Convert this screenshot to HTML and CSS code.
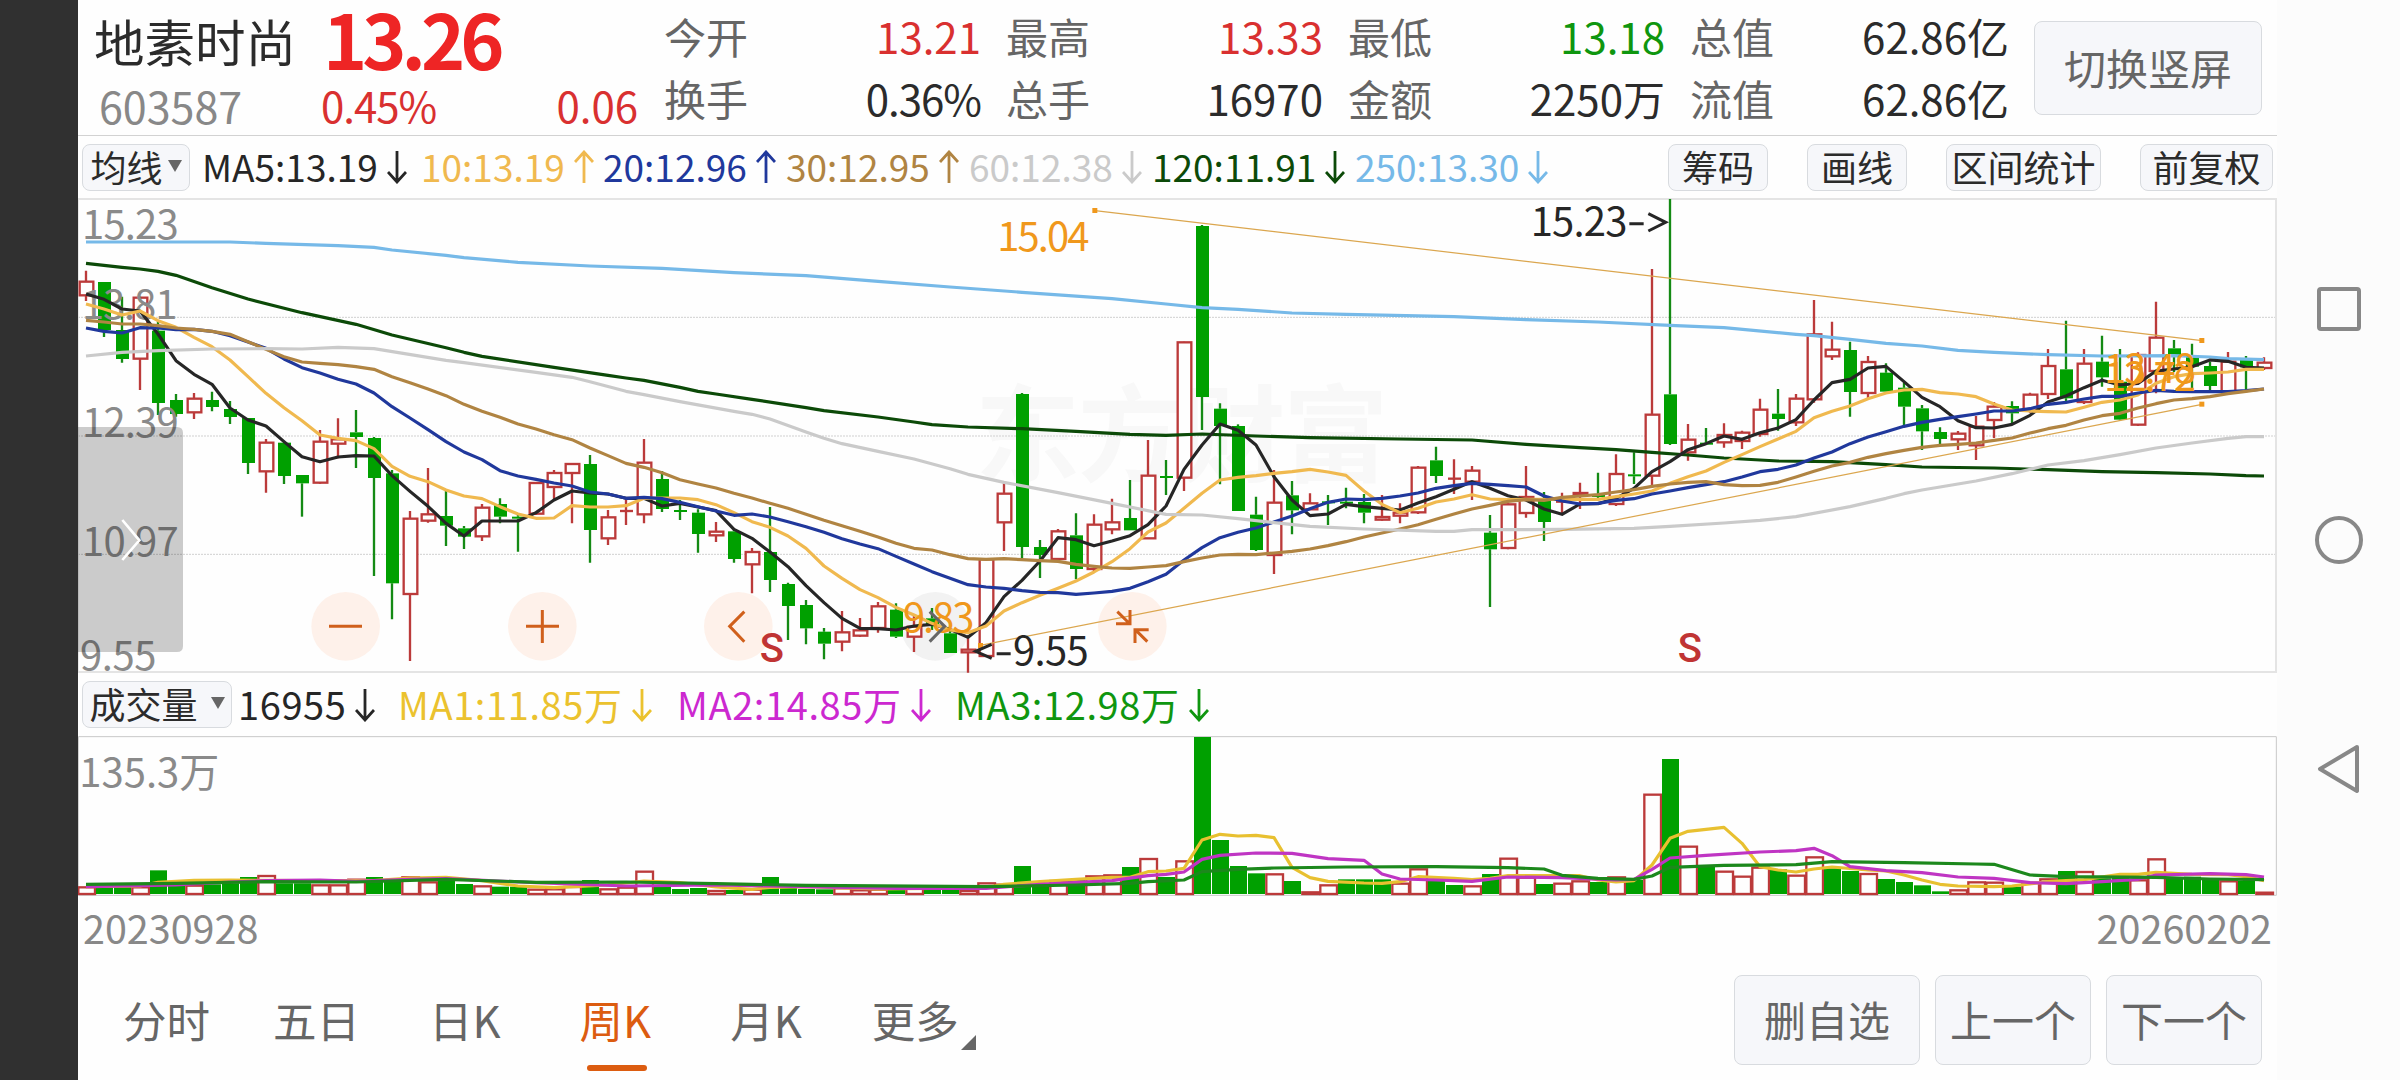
FILE: index.html
```html
<!DOCTYPE html>
<html lang="zh-CN">
<head>
    <meta charset="utf-8">
    <title>地素时尚 603587</title>
    <link rel="stylesheet" href="styles.css">
</head>
<body>
    <div class="cutout"></div>
    <main class="app">
        <header class="quote">
            <div class="stock">
                <div class="name">地素时尚</div>
                <div class="price">13.26</div>
                <div class="code">603587</div>
                <div class="change"><span>0.45%</span><span>0.06</span></div>
            </div>
            <div class="stats">
                <div class="stat"><label>今开</label><span class="up">13.21</span></div>
                <div class="stat"><label>最高</label><span class="up">13.33</span></div>
                <div class="stat"><label>最低</label><span class="down">13.18</span></div>
                <div class="stat"><label>总值</label><span>62.86亿</span></div>
                <div class="stat"><label>换手</label><span class="percent">0.36%</span></div>
                <div class="stat"><label>总手</label><span>16970</span></div>
                <div class="stat"><label>金额</label><span>2250万</span></div>
                <div class="stat"><label>流值</label><span>62.86亿</span></div>
            </div>
            <button class="btn rotate">切换竖屏</button>
        </header>

        <div class="toolbar">
            <button class="btn select">均线<i class="caret"></i></button>
            <div class="ma-list">
                <span class="ma5">MA5:13.19<svg class="arrow"><use href="#down"/></svg></span>
                <span class="ma10">10:13.19<svg class="arrow"><use href="#up"/></svg></span>
                <span class="ma20">20:12.96<svg class="arrow"><use href="#up"/></svg></span>
                <span class="ma30">30:12.95<svg class="arrow"><use href="#up"/></svg></span>
                <span class="ma60">60:12.38<svg class="arrow"><use href="#down"/></svg></span>
                <span class="ma120">120:11.91<svg class="arrow"><use href="#down"/></svg></span>
                <span class="ma250">250:13.30<svg class="arrow"><use href="#down"/></svg></span>
            </div>
            <div class="tools">
                <button class="btn">筹码</button>
                <button class="btn">画线</button>
                <button class="btn wide">区间统计</button>
                <button class="btn mid">前复权</button>
            </div>
        </div>

        <!-- 3 chart units = 1px, one candle every 54 units -->
        <svg class="chart" viewBox="24 24 6597 1425">
            <text class="watermark" x="2715" y="848" textLength="1240">东方财富</text>
            <path class="grid" d="M24 382H6618M24 738H6618M24 1093H6618"/>
            <path class="frame" d="M24 27H6618V1446H24"/>
            <path class="frame thin" d="M25 27V1446"/>
            <g class="controls">
                <circle cx="827" cy="1309" r="103"/>
                <circle cx="1417" cy="1309" r="103"/>
                <circle cx="2005" cy="1309" r="103"/>
                <circle class="off" cx="2596" cy="1309" r="103"/>
                <circle cx="3187" cy="1309" r="103"/>
            </g>
            <g id="candles"></g>
            <g class="axis">
                <text x="36" y="147" textLength="290">15.23</text>
                <text x="36" y="387" textLength="286">13.81</text>
                <text x="36" y="742" textLength="290">12.39</text>
                <text x="36" y="1099" textLength="290">10.97</text>
                <text x="30" y="1440" textLength="229">9.55</text>
            </g>
            <g id="lines"></g>
            <g class="trend">
                <path d="M3075 62L6396 452M2731 1366L6396 643"/>
                <rect x="3067" y="54" width="15" height="15"/>
                <rect x="6388" y="444" width="15" height="15"/>
                <rect x="2724" y="1359" width="15" height="15"/>
                <rect x="6388" y="635" width="15" height="15"/>
                <text x="2782" y="184" textLength="276">15.04</text>
                <text x="2499" y="1325" textLength="214">9.83</text>
                <text x="6102" y="578" textLength="276">13.48</text>
                <text x="6102" y="603" textLength="276">12.72</text>
            </g>
            <g class="peak">
                <text x="4382" y="138" textLength="290">15.23</text>
                <path d="M4678 101H4721M4735 71L4787 97L4735 123"/>
                <text x="2829" y="1425" textLength="227">9.55</text>
                <path d="M2780 1391H2822M2765 1363L2717 1384L2765 1405"/>
            </g>
            <g class="signal">
                <text x="2069" y="1416">S</text>
                <text x="4823" y="1416">S</text>
            </g>
            <g class="icons">
                <path d="M777 1309H876M1368 1309H1467M1417 1260V1359M2023 1265L1979 1309L2023 1355"/>
                <path class="off" d="M2579 1265L2624 1309L2579 1355"/>
                <path d="M3142 1265L3180 1302M3138 1301H3180V1260M3232 1355L3195 1318M3236 1319H3195V1359"/>
            </g>
            <path class="drawer" d="M24 711H321Q339 711 339 729V1368Q339 1386 321 1386H24Z"/>
            <path class="drawer-arrow" d="M157 990L208 1051L157 1110"/>
        </svg>

        <div class="toolbar vol-bar">
            <button class="btn select">成交量<i class="caret"></i></button>
            <div class="vol-list">
                <span class="ma5">16955<svg class="arrow"><use href="#down"/></svg></span>
                <span class="v1">MA1:11.85万<svg class="arrow"><use href="#down"/></svg></span>
                <span class="v2">MA2:14.85万<svg class="arrow"><use href="#down"/></svg></span>
                <span class="v3">MA3:12.98万<svg class="arrow"><use href="#down"/></svg></span>
            </div>
        </div>

        <svg class="volume" viewBox="24 198 6597 483">
            <path class="vol-frame" d="M25 200H6619V676H25Z"/>
            <g class="axis"><text x="28" y="352" textLength="420">135.3万</text></g>
            <g id="bars"></g>
            <g id="vol-lines"></g>
        </svg>

        <div class="dates"><span>20230928</span><span>20260202</span></div>

        <footer class="bottom">
            <div class="tabs">
                <a>分时</a>
                <a class="days">五日</a>
                <a class="k">日K</a>
                <a class="k active">周K</a>
                <a class="month">月K</a>
                <a class="more">更多</a>
            </div>
            <div class="actions">
                <button class="btn big">删自选</button>
                <button class="btn">上一个</button>
                <button class="btn">下一个</button>
            </div>
        </footer>
    </main>
    <nav class="sysnav">
        <svg viewBox="0 0 123 1080">
            <rect x="42" y="289" width="40" height="40" rx="2"/>
            <circle cx="62" cy="540" r="22"/>
            <path d="M80 747L43 769L80 791Z"/>
        </svg>
    </nav>

    <svg class="defs">
        <symbol id="down" viewBox="0 0 20 34"><path d="M10 1V31M1 22L10 32L19 22"/></symbol>
        <symbol id="up" viewBox="0 0 20 34"><path d="M10 33V3M1 12L10 2L19 12"/></symbol>
    </svg>

    <script>
        // color, high, body top, body bottom, low
        var candles = `
            r 242 275 316 333|g 276 276 420 441|g 320 420 507 518|r 320 323 506 600|g 393 422 639 675
            g 612 630 672 680|r 609 626 667 687|g 605 630 651 664|g 633 657 681 702|g 684 684 819 852
            r 747 758 844 908|g 758 758 858 882|g 855 855 880 980|r 720 755 878 881|r 685 748 761 805
            g 660 727 741 834|g 741 744 864 1158|g 840 850 1180 1288|r 963 986 1212 1413|r 834 973 992 998
            g 903 978 1007 1068|g 1008 1015 1040 1077|r 942 953 1039 1053|g 925 942 980 1000|g 970 980 986 1085
            r 878 879 971 975|r 840 849 891 930|r 820 822 849 1000|g 795 822 1020 1118|r 960 982 1045 1065
            r 928 963 963 1005|r 747 818 973 1000|g 843 867 957 966|g 930 960 966 990|g 958 968 1032 1088
            r 996 1025 1036 1056|g 1020 1024 1107 1118|r 1074 1086 1123 1210|g 951 1086 1170 1206|g 1178 1182 1248 1350
            g 1230 1245 1315 1363|g 1314 1325 1361 1408|r 1263 1327 1355 1384|r 1284 1321 1337 1341|r 1236 1249 1314 1328
            g 1240 1259 1340 1344|r 1275 1310 1340 1386|g 1254 1285 1303 1320|g 1320 1330 1389 1389|r 1340 1379 1387 1448
            r 1108 1108 1398 1398|r 878 911 997 1083|g 609 612 1071 1104|g 1050 1071 1095 1164|r 1017 1024 1107 1113
            g 970 1036 1137 1168|r 973 1004 1137 1145|r 926 997 1018 1033|g 870 984 1021 1021|r 750 857 1045 1047
            g 810 858 864 915|r 455 457 863 903|g 105 108 621 720|g 640 656 708 883|g 703 708 963 963
            g 920 974 1080 1083|r 840 938 1095 1152|g 873 916 961 1033|r 910 940 958 960|g 915 934 940 1005
            g 893 935 941 955|g 912 936 968 1000|r 915 981 989 992|r 940 968 977 1000|r 828 833 967 972
            g 770 811 858 879|r 808 866 866 912|r 828 842 875 930|g 975 1028 1078 1251|r 940 943 1074 1078
            r 828 921 969 983|g 906 930 996 1053|r 908 935 935 973|r 878 909 915 957|g 848 915 921 930
            r 793 852 942 948|g 787 853 859 882|r 237 674 857 893|g 27 613 762 765|r 702 749 787 812
            g 714 758 764 765|r 700 735 757 773|r 722 728 753 777|r 626 659 732 740|g 597 671 687 722
            r 612 626 697 708|r 330 433 628 638|r 395 479 499 510|g 455 480 606 680|r 498 516 609 625
            g 520 548 605 606|g 578 593 650 706|g 645 655 724 780|g 712 726 747 765|r 723 731 748 780
            r 678 710 766 810|r 636 650 690 744|g 634 648 670 700|r 608 614 662 668|r 477 528 612 627
            g 392 538 625 634|r 477 521 636 642|g 437 515 562 590|g 477 575 689 692|r 487 495 704 708
            r 335 443 543 610|g 450 475 498 546|g 461 497 530 600|g 515 528 588 605|r 486 515 604 605
            g 498 510 532 600|r 502 518 534 540`;

        // moving averages as index:y pairs
        var averages = {
            ma250: '0:156 8:156 10:160 14:167 16:172 17:180 20:196 21:203 24:217 28:228 32:235 36:248 40:257 44:274 48:291 52:307 57:326 60:342 62:353 64:358 67:369 70:373 76:380 80:389 84:396 88:406 91:413 95:433 96:437 98:448 100:460 102:468 104:481 106:487 109:494 112:498 116:497 118:501 119:506 121:509',
            ma120: '0:220 2:232 3:237 4:244 5:256 7:293 9:327 12:368 15:403 17:435 20:473 21:487 22:499 26:532 29:556 30:564 31:571 33:592 34:604 35:612 37:628 40:653 41:662 44:681 46:696 47:704 49:711 52:716 55:724 58:733 60:736 62:732 65:738 68:743 73:747 77:750 80:763 83:773 85:779 87:787 89:795 91:804 94:813 97:815 100:824 102:831 106:834 109:839 112:845 115:848 118:852 120:857 121:858',
            ma5: '0:312 1:328 2:357 3:363 4:432 5:512 6:553 7:583 8:654 9:690 10:708 11:755 12:800 13:815 14:801 15:797 16:798 17:857 18:904 19:949 20:1000 21:1038 22:993 23:993 24:993 25:968 26:930 27:903 28:909 29:912 30:925 31:925 32:948 33:940 34:951 35:962 36:1018 37:1045 38:1086 39:1130 40:1187 41:1238 42:1285 43:1315 44:1316 45:1320 46:1308 47:1303 48:1318 49:1342 50:1298 51:1220 52:1171 53:1113 54:1043 55:1049 56:1067 57:1053 58:1037 59:1004 60:948 61:838 62:765 63:702 64:721 65:765 66:860 67:930 68:977 69:972 70:943 71:950 72:955 73:960 74:939 75:920 76:898 77:875 78:895 79:917 80:930 81:957 82:973 83:942 84:941 85:925 86:895 87:845 88:815 89:779 90:761 91:738 92:748 93:728 94:714 95:689 96:630 97:578 98:568 99:534 100:529 101:575 102:622 103:650 104:692 105:713 106:714 107:703 108:676 109:636 110:618 111:593 112:571 113:585 114:580 115:543 116:537 117:530 118:510 119:514 120:532 121:534',
            ma10: '0:342 1:357 2:375 3:363 4:392 5:412 6:442 7:470 8:510 9:560 10:610 11:653 12:692 13:735 14:745 15:752 16:776 17:829 18:859 19:875 20:900 21:918 22:926 23:950 24:972 25:985 26:984 27:947 28:951 29:951 30:947 31:925 32:924 33:924 34:929 35:944 36:968 37:995 38:1012 39:1038 40:1075 41:1128 42:1165 43:1199 44:1223 45:1252 46:1275 47:1300 48:1320 49:1328 50:1308 51:1263 52:1238 53:1216 54:1195 55:1173 56:1146 57:1115 58:1076 59:1026 60:999 61:955 62:910 63:870 64:862 65:857 66:850 67:845 68:838 69:846 70:856 71:903 72:943 73:968 74:955 75:936 76:927 77:914 78:927 79:929 80:928 82:928 84:928 85:920 86:912 87:903 88:880 89:860 90:843 91:817 92:794 93:770 94:747 95:724 96:683 97:664 98:648 99:626 100:609 101:600 102:598 103:608 104:612 105:620 106:642 107:660 108:663 109:665 110:666 111:652 112:637 113:630 114:615 115:580 116:560 117:551 118:549 119:546 120:538 121:538',
            ma20: '0:414 1:424 2:429 3:413 4:414 5:419 6:418 7:424 8:437 9:456 10:475 11:507 12:533 13:549 14:568 15:582 16:609 17:650 18:684 19:719 20:755 21:786 22:809 23:842 24:858 25:868 26:879 27:888 28:906 29:912 30:925 31:922 32:926 33:937 34:950 35:963 36:976 37:972 38:981 39:995 40:1010 41:1027 42:1046 43:1062 44:1076 45:1099 46:1122 47:1145 48:1165 49:1184 50:1191 51:1195 52:1202 53:1207 54:1208 55:1213 56:1209 57:1204 58:1195 59:1175 60:1153 61:1110 62:1073 63:1043 64:1027 65:1014 66:996 67:978 68:956 69:937 70:927 71:929 72:925 73:918 74:909 75:895 76:887 77:880 78:883 79:887 80:891 81:918 82:933 83:942 84:940 85:931 86:926 87:912 88:903 89:893 90:884 91:875 92:861 93:845 94:838 95:825 96:804 97:786 98:761 99:741 100:725 101:709 102:697 103:688 104:680 105:672 106:663 107:663 108:656 109:643 110:637 111:627 112:619 113:619 114:609 115:601 116:604 117:605 118:605 119:605 120:602 121:597',
            ma30: '0:391 1:396 2:402 3:402 4:407 5:414 6:418 7:424 8:433 9:455 10:478 11:500 12:516 13:520 14:524 15:530 16:538 17:560 18:578 19:597 20:617 21:643 22:664 23:682 24:702 25:717 26:734 27:749 28:774 29:797 30:820 31:832 32:848 33:869 34:882 35:894 36:910 37:924 38:940 39:955 40:973 41:991 42:1007 43:1024 44:1041 45:1060 46:1075 47:1080 48:1094 49:1106 50:1108 51:1106 52:1109 53:1112 54:1114 55:1123 56:1129 57:1134 58:1135 59:1131 60:1127 61:1115 62:1104 63:1095 64:1093 65:1094 66:1089 67:1084 68:1077 69:1067 70:1055 71:1041 72:1029 73:1017 74:1004 75:988 76:972 77:957 78:946 79:934 80:929 81:931 82:922 83:918 84:914 85:906 86:899 87:889 88:882 89:877 90:875 91:884 92:887 93:886 94:877 95:861 96:844 97:828 98:817 99:802 100:791 101:781 102:772 103:766 104:763 105:759 106:751 107:744 108:729 109:716 110:706 111:690 112:677 113:670 114:654 115:641 116:630 117:626 118:620 119:611 120:604 121:597',
            ma60: '0:498 2:487 4:482 7:477 10:476 12:477 14:472 16:476 20:511 21:518 25:547 27:562 28:575 30:604 31:614 33:635 36:664 37:673 38:687 40:726 41:745 42:761 44:784 46:807 48:836 49:853 51:877 54:908 57:940 60:973 62:975 64:986 66:998 68:1009 71:1017 75:1024 76:1024 77:1019 80:1019 82:1018 86:1015 88:1009 91:999 93:991 95:980 98:950 100:925 101:911 102:900 105:873 107:851 109:825 111:812 113:794 115:774 117:759 119:745 120:740 121:740'
        };

        // color + bar top
        var volumes = 'r651 g640 g650 r651 g601 g643 r646 g643 g640 g621 r617 g640 g640 r645 r645 r628 g621 g632 r621 r636 ' +
            'g625 g642 r648 g650 g650 r658 r657 r650 g630 r657 r652 r604 g646 g657 g654 r662 g660 r658 g621 g654 ' +
            'g657 g658 r654 r660 r658 g657 r655 g658 g656 r662 r639 r643 g588 g645 r632 g630 r618 r615 g591 r566 ' +
            'g621 r573 g201 g510 g588 g610 r612 g633 r666 r645 g628 g628 g628 r640 r597 g632 g645 r648 g612 r565 ' +
            'r622 g642 r640 r633 g636 r621 g630 r373 g267 r529 g590 r604 r619 r592 g598 r616 r561 g595 g603 r611 ' +
            'g627 g636 g646 g664 r660 r636 r637 g650 r637 r627 g603 r605 g625 g622 r630 r567 g622 g620 g624 r633 g633 r667';

        var volAverages = {
            v1: '0:650 3:648 4:637 6:631 8:630 12:632 16:632 18:624 20:622 22:632 24:648 26:653 29:645 31:633 33:638 35:651 37:658 38:652 40:650 44:657 47:655 50:653 51:643 53:635 55:628 57:622 58:622 59:605 60:603 61:595 62:510 63:493 64:498 65:496 66:503 67:592 68:623 69:634 71:639 72:640 73:635 74:620 76:625 77:629 78:625 79:617 81:617 83:617 84:630 85:636 86:632 87:585 88:505 89:484 91:472 92:520 93:590 94:600 95:606 96:597 97:591 99:600 100:603 101:615 102:630 103:643 104:648 106:650 107:648 109:635 111:629 113:613 114:613 115:607 117:613 119:614 120:620 121:632',
            v2: '0:650 5:645 8:636 10:632 13:630 15:634 18:628 20:626 25:638 30:648 35:645 40:650 45:655 50:655 53:643 57:632 59:617 60:613 61:606 62:568 63:556 65:549 67:550 69:566 71:571 72:612 73:627 75:630 77:634 79:621 82:623 85:630 86:628 87:598 88:564 90:556 93:546 95:542 96:535 97:557 98:590 100:602 102:608 104:621 106:625 108:638 110:641 112:635 114:628 115:615 118:611 120:614 121:621',
            v3: '0:643 5:640 10:635 15:636 20:628 25:637 30:636 35:641 40:646 50:650 55:645 58:640 59:635 61:630 62:605 64:598 66:594 70:591 75:590 79:593 81:597 82:616 84:625 86:628 87:618 88:592 91:586 95:584 97:575 101:578 105:582 106:583 108:615 110:620 115:622 118:627 121:629'
        };

        function x(i) {
            return 48 + 54 * i;
        }

        function drawCandles() {
            var out = '';
            candles.trim().split(/[|\n]/).forEach(function(row, i) {
                var c = row.trim().split(' ');
                var cx = x(i), top = +c[2], bottom = +c[3];
                out += '<path class="' + c[0] + '" d="M' + cx + ' ' + c[1] + 'V' + top + 'M' + cx + ' ' + bottom + 'V' + c[4] + '"/>';
                if (c[0] == 'g') {
                    out += '<rect class="g" x="' + (cx - 18) + '" y="' + top + '" width="39" height="' + (bottom - top) + '"/>';
                } else if (top == bottom) {
                    out += '<path class="r" d="M' + (cx - 18) + ' ' + top + 'h39"/>';
                } else {
                    out += '<rect class="r" x="' + (cx - 19) + '" y="' + top + '" width="41" height="' + (bottom - top) + '"/>';
                }
            });
            document.getElementById('candles').innerHTML = out;
        }

        function drawVolumes() {
            var out = '';
            volumes.split(' ').forEach(function(v, i) {
                var top = +v.slice(1), cx = x(i);
                if (v[0] == 'g') {
                    out += '<rect class="g" x="' + (cx - 24) + '" y="' + top + '" width="51" height="' + (672 - top) + '"/>';
                } else {
                    out += '<rect class="r" x="' + (cx - 23) + '" y="' + (top + 1) + '" width="50" height="' + Math.max(671 - top, 3) + '"/>';
                }
            });
            document.getElementById('bars').innerHTML = out;
        }

        function drawLines(id, series) {
            var out = '';
            for (var name in series) {
                var points = series[name].split(' ').map(function(p) {
                    var v = p.split(':');
                    return x(+v[0]) + ',' + v[1];
                });
                out += '<polyline class="' + name + '" points="' + points.join(' ') + '"/>';
            }
            document.getElementById(id).innerHTML = out;
        }

        drawCandles();
        drawVolumes();
        drawLines('lines', averages);
        drawLines('vol-lines', volAverages);
    </script>
</body>
</html>
```
FILE: styles.css
```css
* {
    box-sizing: border-box;
}
body {
    margin: 0;
    width: 2400px;
    height: 1080px;
    display: flex;
    overflow: hidden;
    background: #fefefe;
    color: #2b2b2b;
    font-family: "Noto Sans CJK SC", "Noto Sans", sans-serif;
    font-size: 42px;
    line-height: 1;
    white-space: nowrap;
}
.cutout {
    width: 78px;
    background: #303030;
}
.app {
    width: 2199px;
    display: flex;
    flex-direction: column;
}
.sysnav {
    width: 123px;
    background: #fcfcfc;
}
.sysnav svg {
    display: block;
    width: 123px;
    height: 1080px;
    fill: none;
    stroke: #888;
    stroke-width: 4;
    stroke-linejoin: round;
}
.defs {
    position: absolute;
    width: 0;
    height: 0;
}
.btn {
    display: flex;
    align-items: center;
    justify-content: center;
    padding: 0 0 2px;
    border: 1px solid #d8dbdf;
    border-radius: 8px;
    background: #f6f7fa;
    color: #2b2b2b;
    font: inherit;
}

/* quote header */
.quote {
    height: 136px;
    display: flex;
    border-bottom: 1px solid #d2d2d2;
}
.stock {
    width: 586px;
    padding-left: 16px;
    display: grid;
    grid-template-columns: 227px 317px;
    grid-template-rows: 80px 50px;
    align-items: center;
}
.name {
    font-size: 50.5px;
}
.price {
    color: #ee2525;
    font-size: 75px;
    font-weight: 700;
    line-height: 80px;
    letter-spacing: -5px;
    padding: 0 0 4px 2px;
}
.code {
    color: #888;
    padding-left: 5px;
    font-size: 43px;
}
.change {
    display: flex;
    justify-content: space-between;
    color: #d93030;
}
.change span:first-child, .percent {
    letter-spacing: -1px;
}
.stats {
    width: 1345px;
    padding-top: 5px;
    display: grid;
    grid-template-columns: 317px 317px 317px 319px;
    grid-template-rows: 62px 62px;
    column-gap: 25px;
    align-items: center;
}
.stat {
    display: flex;
    justify-content: space-between;
}
.stat label {
    color: #666;
}
.up {
    color: #d93030;
}
.down {
    color: #0f960f;
}
.rotate {
    width: 228px;
    height: 94px;
    margin: 21px 0 0 25px;
    color: #666;
}

/* indicator rows */
.toolbar {
    height: 62px;
    padding: 0 4px;
    display: flex;
    align-items: center;
    font-size: 37px;
}
.toolbar .btn {
    width: 100px;
    height: 47px;
    font-size: 36px;
}
.toolbar .select {
    width: 108px;
    gap: 5px;
}
.caret {
    border: 7px solid transparent;
    border-top: 12px solid #666;
    border-bottom: 0;
}
.ma-list, .vol-list {
    display: grid;
    grid-template-columns: 219px 182px 183px 183px 183px 203px 200px;
    margin-left: 12px;
    padding-bottom: 2px;
}
.ma-list span, .vol-list span {
    display: flex;
    align-items: center;
}
.arrow {
    width: 20px;
    height: 34px;
    margin: 2px 0 0 9px;
    fill: none;
    stroke: currentColor;
    stroke-width: 2.8;
}
.tools {
    display: flex;
    gap: 39px;
    margin-left: auto;
}
.toolbar .wide {
    width: 155px;
}
.toolbar .mid {
    width: 133px;
}
.vol-bar {
    height: 63px;
}
.vol-bar .select {
    width: 150px;
    gap: 13px;
    margin-top: -1px;
}
.vol-list {
    grid-template-columns: 160px 279px 278px 270px;
    margin-left: 6px;
    font-size: 38px;
    letter-spacing: 0.6px;
}

.ma5 { color: #262626; stroke: #262626; }
.ma10 { color: #f0b94f; stroke: #f0b94f; }
.ma20 { color: #20389c; stroke: #20389c; }
.ma30 { color: #b08442; stroke: #b08442; }
.ma60 { color: #cacaca; stroke: #cacaca; }
.ma120 { color: #0c4a08; stroke: #0c4a08; }
.ma250 { color: #76b9e8; stroke: #76b9e8; }
.v1 { color: #ebc22e; stroke: #e8c030; }
.v2 { color: #cc28d0; stroke: #bf35c3; }
.v3 { color: #0f960f; stroke: #1c881c; }

.ma-list span, .vol-list span {
    stroke: none;
}

/* charts */
.chart {
    display: block;
    width: 2199px;
    height: 475px;
}
.volume {
    display: block;
    width: 2199px;
    height: 161px;
}
.chart text, .volume text {
    font-size: 120px;
}
.chart .watermark {
    font-size: 315px;
    font-weight: 700;
    fill: #f8f8f8;
}
.grid {
    stroke: #d0d0d0;
    stroke-width: 3;
    stroke-dasharray: 6 3;
}
.frame {
    fill: none;
    stroke: #e4e4e4;
    stroke-width: 6;
}
.thin {
    stroke-width: 3;
}
.vol-frame {
    fill: none;
    stroke: #c8c8c8;
    stroke-width: 3;
}
.axis {
    fill: #8a8a8a;
}
#candles, #bars {
    stroke-width: 7;
}
path.g {
    stroke: #148a14;
}
rect.g {
    fill: #00a000;
}
.r {
    fill: #fefefe;
    stroke: #bb3a3a;
}
#lines polyline, #vol-lines polyline {
    fill: none;
    stroke-width: 9.5;
    stroke-linejoin: round;
}
.trend {
    fill: #f0981c;
}
.trend path {
    stroke: #dba64e;
    stroke-width: 3.6;
}
.peak {
    fill: #262626;
}
.peak path {
    fill: none;
    stroke: #262626;
    stroke-width: 9;
}
.signal {
    fill: #c03434;
    font-family: Roboto, sans-serif;
    font-weight: 500;
}
.controls {
    fill: #fef1ea;
}
.controls .off {
    fill: #f2f2f2;
}
.icons {
    fill: none;
    stroke: #d0601c;
    stroke-width: 9;
}
.icons .off {
    stroke: #666;
}
.drawer {
    fill: rgba(0, 0, 0, 0.2);
}
.drawer-arrow {
    fill: none;
    stroke: #fff;
    stroke-width: 8;
}
.dates {
    height: 64px;
    padding: 0 5px 4px 5px;
    display: flex;
    align-items: center;
    justify-content: space-between;
    color: #888;
    font-size: 39.5px;
}

/* bottom bar */
.bottom {
    flex: 1;
    display: flex;
    justify-content: space-between;
    padding: 14px 15px 0 45px;
}
.tabs {
    display: flex;
    height: 98px;
    color: #666;
    font-size: 43.5px;
}
.tabs a {
    position: relative;
    margin-right: 63px;
    padding-bottom: 4px;
    height: 94px;
    display: flex;
    align-items: center;
}
.tabs .days {
    margin-right: 69px;
}
.tabs .k {
    margin-right: 79px;
}
.tabs .month {
    margin-right: 70px;
}
.tabs .active {
    color: #dc5c10;
}
.active::after {
    content: "";
    position: absolute;
    left: 7px;
    bottom: -2px;
    width: 60px;
    height: 6px;
    border-radius: 3px;
    background: #dc5c10;
}
.more::after {
    content: "";
    position: absolute;
    right: -17px;
    bottom: 19px;
    border-left: 15px solid transparent;
    border-bottom: 15px solid #666;
}
.actions {
    display: flex;
    gap: 15px;
}
.actions .btn {
    width: 156px;
    height: 90px;
    color: #666;
}
.actions .big {
    width: 186px;
}
```
